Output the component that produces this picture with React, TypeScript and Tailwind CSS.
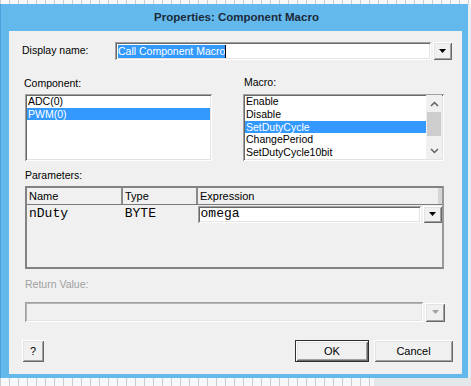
import React from 'react';

const sunken =
  'shadow-[inset_1px_1px_0_#a0a0a0,inset_-1px_-1px_0_#ffffff,inset_2px_2px_0_#696969,inset_-2px_-2px_0_#e3e3e3]';
const raised =
  'shadow-[inset_1px_1px_0_#ffffff,inset_-1px_-1px_0_#696969,inset_2px_2px_0_#e3e3e3,inset_-2px_-2px_0_#a0a0a0]';

function Arrow({ color = '#000' }: { color?: string }) {
  return (
    <svg width="7" height="4" viewBox="0 0 7 4">
      <path d="M0 0 H7 L3.5 4 Z" fill={color} />
    </svg>
  );
}

function DropButton({ w, h, disabled }: { w: string; h: string; disabled?: boolean }) {
  return (
    <div className={`${w} ${h} bg-[#f0f0f0] ${raised} flex items-center justify-center`}>
      <Arrow color={disabled ? '#a0a0a0' : '#000'} />
    </div>
  );
}

const macros = ['Enable', 'Disable', 'SetDutyCycle', 'ChangePeriod', 'SetDutyCycle10bit'];

export default function App() {
  return (
    <div className="w-[471px] h-[386px] flex flex-col overflow-hidden bg-[#f5f6f7] font-['Liberation_Sans',Arial,sans-serif] text-[10.5px] text-black">
      <div className="h-[4px] shrink-0 bg-[repeating-linear-gradient(90deg,#c9ccd0_0px,#c9ccd0_1px,#f7f8f9_1px,#f7f8f9_9px)]" />
      <div className="flex shrink-0">
        <div className="w-[468px] bg-[#64b9ec] flex flex-col pl-[8px] pr-[6px] pb-[4px] border-l border-[#4aa3dc]">
          <div className="h-[27px] flex items-center justify-center font-bold text-[11.5px] text-[#1b2a3a] pl-[2px]">
            Properties: Component Macro
          </div>
          <div className="h-[343px] bg-[#f0f0f0] flex flex-col">
            {/* display name */}
            <div className="mt-[11px] h-[18px] flex items-center">
              <div className="w-[106px] pl-[13px]">Display name:</div>
              <div className={`w-[316px] h-[18px] bg-white ${sunken} flex items-center pl-[3px]`}>
                <span className="bg-[#3399ff] text-white leading-[13px]">Call Component Macro</span>
                <span className="w-[1px] h-[13px] bg-black" />
              </div>
              <div className="ml-[2px]">
                <DropButton w="w-[19px]" h="h-[18px]" />
              </div>
            </div>

            {/* component / macro labels */}
            <div className="mt-[16px] h-[14px] flex items-center">
              <div className="w-[235px] pl-[15px] pt-[2px]">Component:</div>
              <div>Macro:</div>
            </div>

            {/* list boxes */}
            <div className="mt-[4px] flex">
              <div className={`ml-[16px] w-[187px] h-[67px] bg-white ${sunken} p-[2px] pt-[1px]`}>
                <div className="h-[13px] leading-[13px] pl-[1px]">ADC(0)</div>
                <div className="h-[12px] leading-[12px] pl-[1px] bg-[#3399ff] text-white">PWM(0)</div>
              </div>
              <div className={`ml-[31px] w-[201px] h-[67px] bg-white ${sunken} p-[2px] pt-[1px] flex`}>
                <div className="flex-1 flex flex-col">
                  {macros.map((m, i) => (
                    <div
                      key={m}
                      className={`h-[12.8px] leading-[13px] pl-[1px] ${i === 2 ? 'bg-[#3399ff] text-white' : ''}`}
                    >
                      {m}
                    </div>
                  ))}
                </div>
                <div className="w-[16px] bg-[#f0f0f0] flex flex-col">
                  <div className="h-[17px] flex items-center justify-center">
                    <svg width="9" height="6" viewBox="0 0 9 6">
                      <path d="M1 5 L4.5 1.5 L8 5" fill="none" stroke="#606060" strokeWidth="1.5" />
                    </svg>
                  </div>
                  <div className="h-[24px] bg-[#cdcdcd] mx-[1px]" />
                  <div className="flex-1" />
                  <div className="h-[17px] flex items-center justify-center">
                    <svg width="9" height="6" viewBox="0 0 9 6">
                      <path d="M1 1 L4.5 4.5 L8 1" fill="none" stroke="#606060" strokeWidth="1.5" />
                    </svg>
                  </div>
                </div>
              </div>
            </div>

            {/* parameters */}
            <div className="mt-[8px] h-[14px] pl-[16px] flex items-center">Parameters:</div>
            <div className="mt-[3px] ml-[16px] w-[419px] h-[83px] border-2 border-[#838383] border-r-[#9a9a9a] bg-[#f0f0f0] flex flex-col">
              <div className="h-[17px] flex border-b border-[#7a7a7a] text-[11px]">
                <div className="w-[96px] border-r-2 border-[#8a8a8a] pl-[2px] flex items-center">Name</div>
                <div className="w-[75px] border-r-2 border-[#8a8a8a] pl-[2px] flex items-center">Type</div>
                <div className="flex-1 pl-[2px] flex items-center border-r-[4px] border-[#d6d6d6]">Expression</div>
              </div>
              <div className="h-[18px] flex items-center font-['Liberation_Mono','Courier_New',monospace] text-[13px]">
                <div className="w-[96px] pl-[2px]">nDuty</div>
                <div className="w-[75px] pl-[2px]">BYTE</div>
                <div className={`w-[224px] h-[17px] bg-white ${sunken} pl-[3px] flex items-center`}>omega</div>
                <div className="ml-[2px]">
                  <DropButton w="w-[19px]" h="h-[17px]" />
                </div>
              </div>
            </div>

            {/* return value */}
            <div className="mt-[9px] h-[14px] pl-[16px] flex items-center text-[#a0a0a0]">Return Value:</div>
            <div className="mt-[10px] ml-[16px] flex items-center">
              <div className="w-[398px] h-[20px] bg-[#f0f0f0] shadow-[inset_1px_1px_0_#a0a0a0,inset_-1px_-1px_0_#ffffff,inset_2px_2px_0_#b4b4b4,inset_-2px_-2px_0_#e3e3e3]" />
              <div className="ml-[2px]">
                <DropButton w="w-[20px]" h="h-[19px]" disabled />
              </div>
            </div>

            {/* buttons */}
            <div className="mt-[18px] h-[22px] flex">
              <div className={`ml-[13px] w-[22px] h-[22px] bg-[#f0f0f0] ${raised} flex items-center justify-center text-[11px]`}>
                ?
              </div>
              <div className="ml-[251px] w-[74px] h-[22px] border border-[#2e2e2e] bg-[#f0f0f0] flex items-center justify-center text-[11px]">
                <div className={`w-full h-full ${raised} flex items-center justify-center`}>OK</div>
              </div>
              <div className={`ml-[5px] w-[79px] h-[22px] bg-[#f0f0f0] ${raised} flex items-center justify-center text-[11px]`}>
                Cancel
              </div>
            </div>
          </div>
        </div>
        <div className="flex-1 bg-[#e9edf0]" />
      </div>
      <div className="flex-1 flex">
        <div className="w-[374px] bg-[repeating-linear-gradient(90deg,#c9ccd0_0px,#c9ccd0_1px,#f7f8f9_1px,#f7f8f9_9px)]" />
        <div className="flex-1 bg-[#e4e7ea]" />
      </div>
    </div>
  );
}
